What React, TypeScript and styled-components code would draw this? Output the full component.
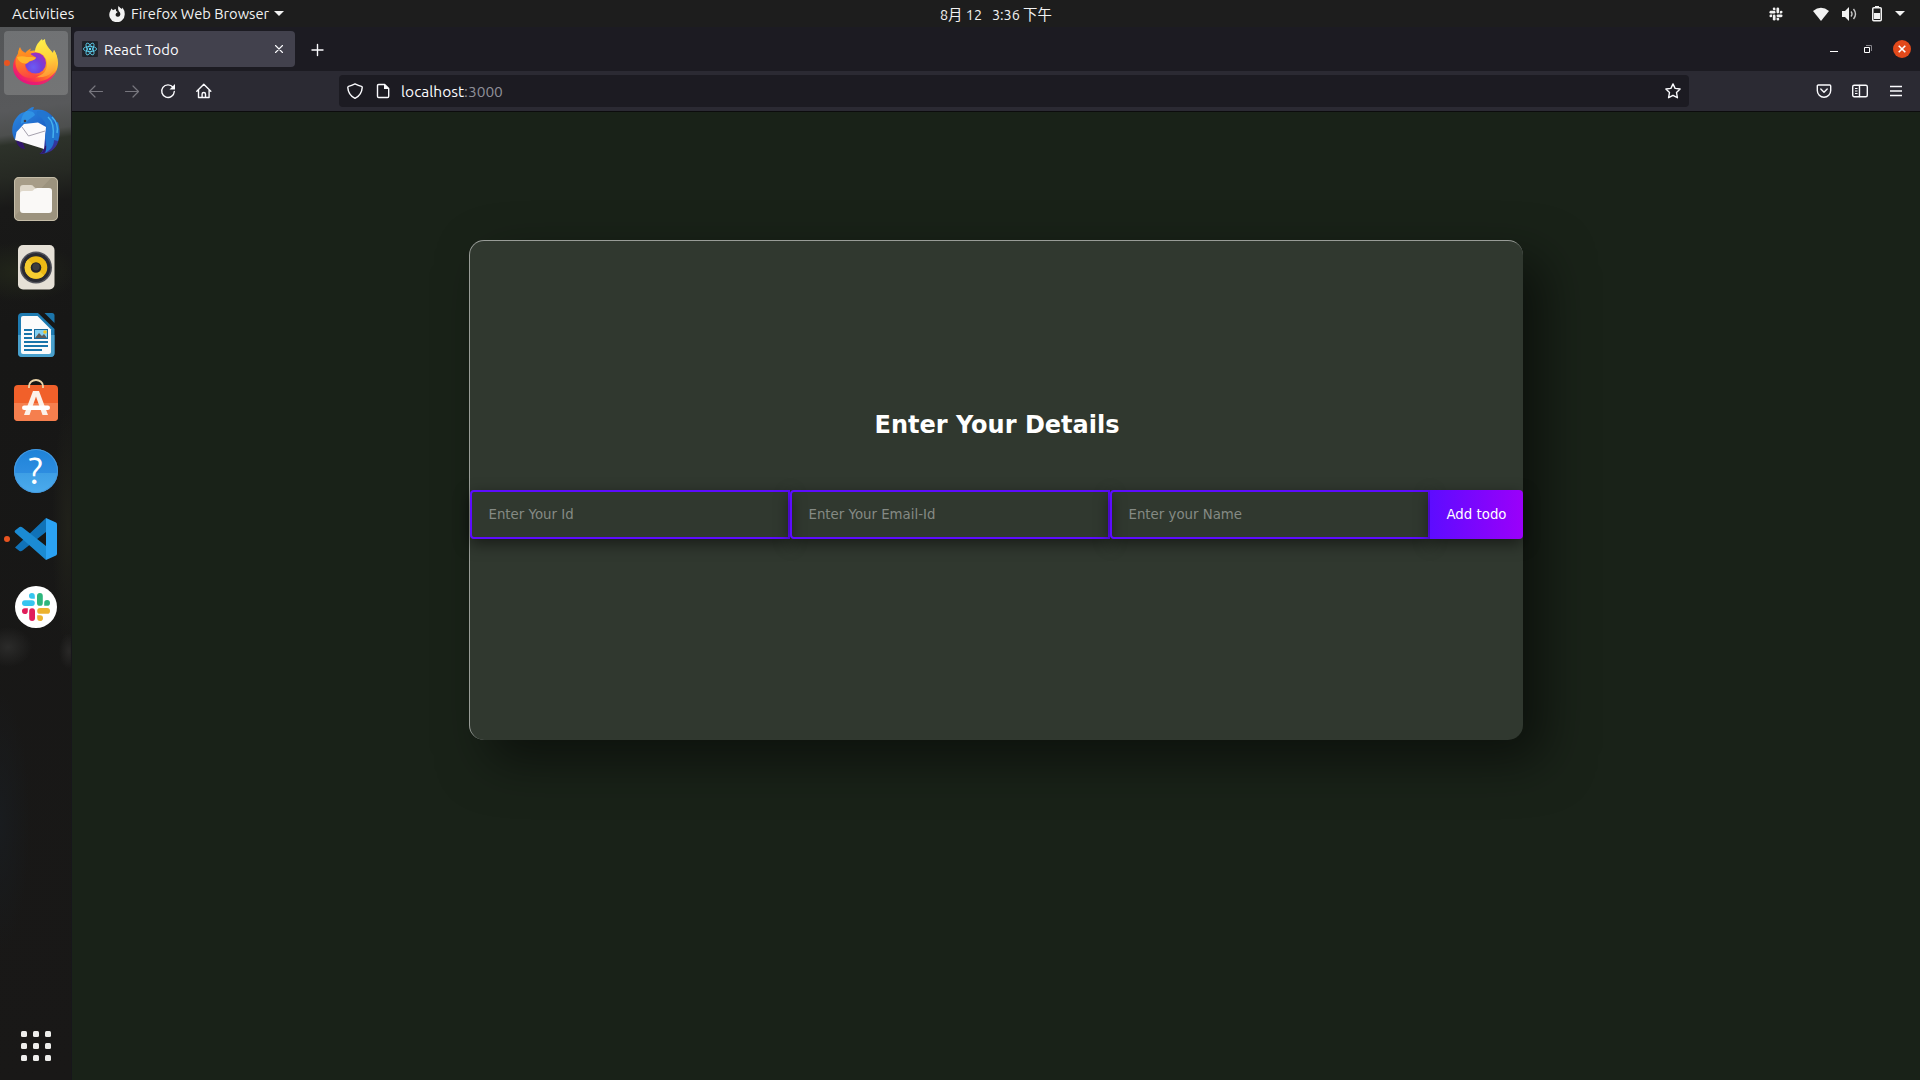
import React from 'react';
import styled, { createGlobalStyle } from 'styled-components';

const uiFont = `Ubuntu, 'Noto Sans', 'Noto Sans CJK SC', sans-serif`;
const pageFont = `'DejaVu Sans', sans-serif`;

const GlobalStyle = createGlobalStyle`
  * { box-sizing: border-box; }
  body { margin: 0; background: #192218; overflow: hidden; }
`;

const Desktop = styled.div`
  display: flex;
  flex-direction: column;
  width: 1920px;
  height: 1080px;
  overflow: hidden;
  font-family: ${uiFont};
  color: #f2f2f2;
`;

const TopBar = styled.header`
  flex: none;
  display: grid;
  grid-template-columns: 928px auto 1fr;
  align-items: center;
  height: 27px;
  padding: 0 15px 0 12px;
  background: #1d1d1d;
`;

const Group = styled.div`
  display: flex;
  align-items: center;
`;

const Label = styled.span<{ $size?: number; $w?: number }>`
  font-size: ${(p) => p.$size ?? 14.7}px;
  width: ${(p) => (p.$w ? `${p.$w}px` : 'auto')};
  line-height: 20px;
  white-space: pre;
`;

const Clock = styled(Label)`
  padding-top: 2px;
`;

const Workspace = styled.div`
  flex: 1;
  display: flex;
  min-height: 0;
`;

const Dock = styled.nav`
  flex: none;
  display: flex;
  flex-direction: column;
  align-items: center;
  gap: 4px;
  width: 71px;
  padding: 4px 0 19px;
  background:
    radial-gradient(ellipse 24px 20px at 8px 620px, #2b2b2a, transparent),
    radial-gradient(ellipse 10px 18px at 69px 624px, #292827, transparent),
    radial-gradient(ellipse 30px 130px at 0 795px, #191c1f, transparent),
    radial-gradient(ellipse 60px 30px at 20px 245px, #22261a, transparent),
    radial-gradient(ellipse 16px 120px at 68px 500px, #20211a, transparent),
    linear-gradient(172deg, #545658 0, #58595b 84px, #4d4f4e 108px, #2d322a 118px, #262923 150px, #191918 180px, #171716 300px, #191817 100%);
`;

const DockItem = styled.div<{ $active?: boolean; $running?: boolean }>`
  position: relative;
  flex: none;
  display: flex;
  align-items: center;
  justify-content: center;
  width: 64px;
  height: 64px;
  border-radius: 4px;
  background: ${(p) => (p.$active ? 'rgba(255,255,255,.17)' : 'transparent')};

  &::before {
    content: '';
    display: ${(p) => (p.$running ? 'block' : 'none')};
    position: absolute;
    left: 0;
    top: 29px;
    width: 6px;
    height: 6px;
    border-radius: 50%;
    background: #e95420;
  }
`;

const AppsGrid = styled.div`
  display: grid;
  grid-template-columns: repeat(3, 6px);
  gap: 6px;
  margin-top: auto;
`;

const AppsDot = styled.i`
  height: 6px;
  border-radius: 1.5px;
  background: #eeeeec;
`;

const Window = styled.main`
  flex: 1;
  display: flex;
  flex-direction: column;
  min-width: 0;
  border-left: 1px solid #17161b;
`;

const TabStrip = styled.div`
  flex: none;
  display: flex;
  align-items: center;
  height: 44px;
  padding: 0 9px 0 2px;
  background: #1c1b22;
`;

const Tab = styled.div`
  display: flex;
  align-items: center;
  width: 221px;
  height: 36px;
  padding: 0 11px 0 8px;
  border-radius: 4px;
  background: #42414d;
  color: #fbfbfe;
`;

const TabTitle = styled(Label)`
  flex: 1;
  margin-left: 6px;
  padding-top: 1px;
`;

const NewTab = styled.div`
  display: flex;
  margin: 1px 0 0 15px;
`;

const WindowControls = styled.div`
  display: flex;
  align-items: center;
  margin-left: auto;
`;

const Toolbar = styled.div`
  flex: none;
  display: flex;
  align-items: center;
  height: 41px;
  padding: 0 16px;
  background: #2b2a33;
  border-bottom: 1px solid #0c0c0d;
`;

const NavButtons = styled.div`
  display: flex;
  gap: 20px;
  width: 251px;
`;

const UrlBar = styled.div`
  display: flex;
  align-items: center;
  width: 1350px;
  height: 32px;
  padding: 0 8px;
  border-radius: 4px;
  background: #1c1b22;
`;

const Url = styled(Label)`
  flex: 1;
  margin-left: 10px;
  padding-top: 1px;
  color: #fbfbfe;
`;

const Port = styled.span`
  color: #8f8f98;
`;

const Page = styled.section`
  flex: 1;
  display: flex;
  justify-content: center;
  align-items: flex-start;
  padding-top: 128px;
  background: #192218;
  font-family: ${pageFont};
`;

const Card = styled.div`
  display: flex;
  flex-direction: column;
  align-items: center;
  width: 1054px;
  height: 500px;
  margin-right: 1px;
  padding-top: 170px;
  border-top: 1px solid rgba(255, 255, 255, 0.5);
  border-left: 1px solid rgba(255, 255, 255, 0.5);
  border-radius: 15px;
  background: rgba(255, 255, 255, 0.1);
  box-shadow: 20px 20px 50px rgba(0, 0, 0, 0.5);
`;

const Title = styled.h1`
  margin: 0 0 51px;
  padding-left: 2px;
  font-size: 24px;
  line-height: 28px;
  font-weight: 700;
  color: #fff;
`;

const Form = styled.form`
  display: flex;
  width: 1053px;
`;

const Field = styled.input`
  width: 320px;
  height: 49px;
  padding: 14px 32px 14px 17px;
  border: 2px solid #5d0cff;
  border-radius: 4px 0 0 4px;
  outline: none;
  background: transparent;
  color: #fff;
  font: 13.333px ${pageFont};
  box-shadow: 0 5px 15px rgba(0, 0, 0, 0.5);

  &::placeholder {
    color: #858a84;
    opacity: 1;
  }
`;

const AddButton = styled.button`
  width: 93px;
  height: 49px;
  padding: 0 0 1px 1px;
  border: 0;
  border-radius: 0 4px 4px 0;
  background: linear-gradient(90deg, #5d0cff 0%, #9b00fa 100%);
  color: #fff;
  font: 13.333px ${pageFont};
  box-shadow: 0 5px 15px rgba(0, 0, 0, 0.5);
`;

const Svg = ({ w, h = w, vb, children }: { w: number; h?: number; vb?: string; children: React.ReactNode }) => (
  <svg width={w} height={h} viewBox={vb ?? `0 0 ${w} ${h}`} fill="none" style={{ display: 'block', flex: 'none' }}>
    {children}
  </svg>
);

const Firefox = () => (
  <Svg w={48}>
    <defs>
      <linearGradient id="ffBody" x1="40" y1="6" x2="8" y2="42" gradientUnits="userSpaceOnUse">
        <stop offset="0" stopColor="#fff44f" /><stop offset=".32" stopColor="#ffb326" />
        <stop offset=".6" stopColor="#ff6a2b" /><stop offset=".82" stopColor="#f9314f" /><stop offset="1" stopColor="#e31587" />
      </linearGradient>
      <linearGradient id="ffFlame" x1="30" y1="0" x2="40" y2="40" gradientUnits="userSpaceOnUse">
        <stop offset="0" stopColor="#fff04a" /><stop offset=".5" stopColor="#ffd23a" /><stop offset="1" stopColor="#ff8a35" />
      </linearGradient>
      <radialGradient id="ffGlobe" cx=".4" cy=".7" r=".75">
        <stop offset="0" stopColor="#6a5cf5" /><stop offset=".5" stopColor="#7340dc" /><stop offset="1" stopColor="#a62bb9" />
      </radialGradient>
      <linearGradient id="ffHead" x1="6" y1="10" x2="12" y2="42" gradientUnits="userSpaceOnUse">
        <stop offset="0" stopColor="#ff9a1c" /><stop offset=".45" stopColor="#ff7a28" /><stop offset="1" stopColor="#fb3b48" />
      </linearGradient>
    </defs>
    <path d="M8 8c-1 2-1 4-1 6-4 4-6 9-6 14C1 39 12 46 23.500 46S46 36 46 24c0-5-1.500-9-4-13l-1 3c-3-4-8-8-8-14-6 3-8 8-8 12-4-1-8 0-11 2-3-1-5-3-6-6z" fill="url(#ffBody)" />
    <path d="M30 0c-5 4-7 9-7 13 6 0 11 4 12 10 1 8-4 14-12 15 13 2 22-6 22-17 0-4-1-7-3-10l-1 4c-2-4-9-8-11-15z" fill="url(#ffFlame)" />
    <circle cx="23.500" cy="24" r="10.500" fill="url(#ffGlobe)" />
    <path d="M8 8.500c0 3 2 5 5 6 2-3 4-4 6-5-1 2-1 4 0 6l5 3c-1 3-5 3-7 4-1 2-3 2-4 3 0 9 8 12 15 10-4 5-15 5-20-1-5-5-6-13-2-20 0-3 1-4 2-6z" fill="url(#ffHead)" />
    <path d="M5 18c3-1 7-1 10 0 3 0 6-.5 9 .5-1 3-5 3-7 4-1 1.500-3 2-4 2-4 0-7-3-8-6.500z" fill="#ffb52b" />
    <path d="M1.500 31c4 9 12 12 22 12 9 0 17-5 21-12-3 9-11 15-21 15-11 0-19-6-22-15z" fill="#e4177c" opacity=".75" />
  </Svg>
);

const Thunderbird = () => (
  <Svg w={48}>
    <defs>
      <linearGradient id="tb" x1="10" y1="2" x2="38" y2="46" gradientUnits="userSpaceOnUse">
        <stop stopColor="#2a86df" /><stop offset=".5" stopColor="#1d63c8" /><stop offset="1" stopColor="#3a2b93" />
      </linearGradient>
    </defs>
    <path d="M3 33C-1 27-1 17 5 10c3-4 6-5 9-5 2-3 5-5 8-5l-1 3c8-2 16 1 21 8 6 7 7 16 4 24-2 7-9 12-18 12 3-3 4-6 4-10z" fill="url(#tb)" />
    <path d="M4 33c1 6 5 9 9 9l-2-6z" fill="#32166b" />
    <path d="M27 47c3-1 5-4 6-8l5-1c-1 5-5 9-11 9z" fill="#32166b" />
    <path d="M12 17l14-1.500L34 20l-2 22L3 33l1.500-8z" fill="#fbfafc" />
    <path d="M10 20l6.500 9L33 24" stroke="#a5a1ae" strokeWidth="1" />
    <path d="M25 4c9-1 17 5 17 13l4-2c2 6 2 13 0 19l-4-1c0 7-5 11-9 13 2-4 1-8 1-11-2-7 1-11 0-16-1-5-5-9-9-11z" fill="#2275d0" />
    <path d="M36 10c6 5 6 13 5 21M40 10c5 5 6 11 5 16" stroke="#45b1ee" strokeWidth="1.500" />
    <path d="M14 4c4 0 8 0 9 4-3 3-7 4-9 8-2-1-4 0-5 1 0-5 1-9 5-13z" fill="#2f92e4" />
    <circle cx="13" cy="14" r="1.300" fill="#3d3a45" />
  </Svg>
);

const Files = () => (
  <Svg w={48}>
    <rect x="2" y="2" width="44" height="44" rx="5" fill="#9c937e" />
    <path d="M2 42V7a5 5 0 0 1 5-5h33z" fill="#a79d88" />
    <rect x="2.500" y="2.500" width="43" height="43" rx="4.500" stroke="#c5bda8" />
    <path d="M8 13q0-3 3-3h8q2 0 3 2l1.500 1V20H8z" fill="#dfd8ca" />
    <path d="M8 19q0-3 3-3h8q2 0 3-1.500 1-1.500 3-1.500h12q3 0 3 3v19q0 3-3 3H11q-3 0-3-3z" fill="#faf9f7" />
  </Svg>
);

const Rhythmbox = () => (
  <Svg w={48}>
    <rect x="6" y="2" width="36.500" height="44.500" rx="5" fill="#e5e0d6" />
    <circle cx="24" cy="24.500" r="16" fill="#51525a" />
    <circle cx="24" cy="24.500" r="14.500" fill="#292a31" />
    <circle cx="24" cy="24.500" r="11.300" fill="#ecb914" />
    <path d="M16 16.500a11.300 11.300 0 0 0 16 16" fill="#f5cd31" />
    <circle cx="24" cy="24.500" r="5.300" fill="#24242a" />
    <circle cx="24" cy="23.800" r="3.600" fill="#3c3c3e" />
  </Svg>
);

const Writer = () => (
  <Svg w={48}>
    <path d="M10 2h16l16.500 16v24a4 4 0 0 1-4 4H10a4 4 0 0 1-4-4V6a4 4 0 0 1 4-4z" fill="#1e7bb1" />
    <path d="M6 24h36.500v18a4 4 0 0 1-4 4H10a4 4 0 0 1-4-4z" fill="#49a0cc" />
    <path d="M11 5h14.500L39 18.500V41q0 2-2 2H11q-2 0-2-2V7q0-2 2-2z" fill="#fbfbfb" />
    <path d="M32.500 2H40a2.500 2.500 0 0 1 2.500 2.500V12z" fill="#1c75aa" />
    <path d="M12 19h8M12 23h8M12 27h8M12 31h24M12 35h24M12 39h18" stroke="#1874aa" strokeWidth="2" />
    <rect x="22.500" y="18.500" width="13" height="9" fill="#83d0f1" stroke="#176a9c" />
    <path d="M23 27l4-5 3 3 2-2 3 4z" fill="#5d5b58" /><circle cx="33" cy="21" r="1.800" fill="#f5c51c" />
  </Svg>
);

const Software = () => (
  <Svg w={48}>
    <rect x="2" y="6" width="44" height="36" rx="4" fill="#f1602a" />
    <path d="M2 24h44v14a4 4 0 0 1-4 4H6a4 4 0 0 1-4-4z" fill="#f57f4e" />
    <path d="M17 9V7a7 6 0 0 1 14 0v2" stroke="#ecd4a9" strokeWidth="1.800" />
    <path d="M21 12h6l9 24h-5.500L24 17.500 17.500 36H12z" fill="#fcf1e9" />
    <rect x="10" y="26.500" width="28" height="4.500" rx="2.200" fill="#fff" />
  </Svg>
);

const HelpBadge = styled.div`
  display: flex;
  align-items: center;
  justify-content: center;
  width: 44px;
  height: 44px;
  border-radius: 50%;
  background: linear-gradient(#1e82d8 0, #2d8de0 54%, #3e9fe5 55%, #4babed 100%);
  box-shadow: inset 0 0 0 1px #4599df;
  color: #fff;
  font: 37px/44px Ubuntu, 'Noto Sans', sans-serif;
`;

const VSCode = () => (
  <Svg w={48}>
    <path d="M3 32.500 7.500 36q1.500.8 3-.4L34 17V3z" fill="#1072b8" />
    <path d="M3 15.500 7.500 12q1.500-.8 3 .4L34 31v14L3 17.500q-.8-1 0-2z" fill="#1b8bd3" />
    <path d="M34 3l10 4.500q1 .6 1 2v29q0 1.400-1 2L34 45z" fill="#2ba2f3" />
  </Svg>
);

const SlackMark = ({ mono }: { mono?: boolean }) => {
  const c = mono ? ['#f0f0f0', '#f0f0f0', '#f0f0f0', '#f0f0f0'] : ['#36c5f0', '#2eb67d', '#ecb22e', '#e01e5a'];
  return (
    <>
      {c.map((fill, i) => (
        <g key={fill + i} transform={`rotate(${i * 90} 24 24)`} fill={fill}>
          <rect x="10" y="17.200" width="12.800" height="5.800" rx="2.900" />
          <path d="M22.800 15.800h-3a2.900 2.900 0 1 1 3-2.900z" />
        </g>
      ))}
    </>
  );
};

const SlackApp = () => (
  <Svg w={48}>
    <circle cx="24" cy="24" r="21" fill="#fff" />
    <SlackMark />
  </Svg>
);

const dock = [
  { name: 'firefox', icon: <Firefox />, active: true, running: true },
  { name: 'thunderbird', icon: <Thunderbird /> },
  { name: 'files', icon: <Files /> },
  { name: 'rhythmbox', icon: <Rhythmbox /> },
  { name: 'writer', icon: <Writer /> },
  { name: 'software', icon: <Software /> },
  { name: 'help', icon: <HelpBadge>?</HelpBadge> },
  { name: 'vscode', icon: <VSCode />, running: true },
  { name: 'slack', icon: <SlackApp /> },
];

const line = { stroke: '#fbfbfe', strokeWidth: 1.4, strokeLinecap: 'round' as const, strokeLinejoin: 'round' as const };
const dim = { ...line, stroke: '#77767e' };

const Tray = styled.div`
  display: flex;
  align-items: center;
  justify-content: flex-end;
`;

const Spacer = styled.span<{ $w: number }>`
  flex: none;
  width: ${(p) => p.$w}px;
`;

const fields = ['Enter Your Id', 'Enter Your Email-Id', 'Enter your Name'];

export default function App() {
  return (
    <Desktop>
      <GlobalStyle />
      <TopBar>
        <Group>
          <Label $w={97} $size={15.2}>Activities</Label>
          <Svg w={16}>
            <path d="M2.500 2.500 4 4.200Q5.500 3 7 3.200L7 5l1.800 1Q6.500 7 6.500 9A2.400 2.400 0 0 0 11 9.500Q12 7 10 5.500 8.500 3.500 9.500 0q1.500 2 3.500 3l.5-1.500Q16 5 15.700 8.500A7.700 7.500 0 1 1 1.300 5z" fill="#f2f2f2" />
          </Svg>
          <Spacer $w={6} />
          <Label $w={143}>Firefox Web Browser</Label>
          <Svg w={10} h={5}><path d="M0 0h10L5 5z" fill="#f2f2f2" /></Svg>
        </Group>
        <Clock $size={14.4}>8月 12   3:36 下午</Clock>
        <Tray>
          <Svg w={14} vb="9 9 30 30"><SlackMark mono /></Svg>
          <Spacer $w={30} />
          <Svg w={16} h={14}><path d="M0 4Q8-2.500 16 4L8 14z" fill="#f2f2f2" /></Svg>
          <Spacer $w={13} />
          <Svg w={15} h={14}>
            <path d="M0 4h3l4-4v14L3 10H0z" fill="#f2f2f2" />
            <path d="M9 4.500q2 2.500 0 5M11.500 2q4 5 0 10" stroke="#c8c8c8" strokeWidth="1.400" />
          </Svg>
          <Spacer $w={15} />
          <Svg w={10} h={16}>
            <path d="M3 0h4v2H3z" fill="#f2f2f2" />
            <rect x=".75" y="1.750" width="8.500" height="13" rx="1" stroke="#f2f2f2" strokeWidth="1.500" />
            <path d="M2 7h6v6H2z" fill="#f2f2f2" />
          </Svg>
          <Spacer $w={13} />
          <Svg w={10} h={5}><path d="M0 0h10L5 5z" fill="#f2f2f2" /></Svg>
        </Tray>
      </TopBar>
      <Workspace>
        <Dock>
          {dock.map((d) => (
            <DockItem key={d.name} $active={d.active} $running={d.running}>{d.icon}</DockItem>
          ))}
          <AppsGrid>
            {Array.from({ length: 9 }, (_, i) => <AppsDot key={i} />)}
          </AppsGrid>
        </Dock>
        <Window>
          <TabStrip>
            <Tab>
              <Svg w={16}>
                <rect width="16" height="16" rx="1" fill="#20232a" />
                <g stroke="#61dafb" strokeWidth=".8">
                  <ellipse cx="8" cy="8" rx="6.600" ry="2.600" />
                  <ellipse cx="8" cy="8" rx="6.600" ry="2.600" transform="rotate(60 8 8)" />
                  <ellipse cx="8" cy="8" rx="6.600" ry="2.600" transform="rotate(120 8 8)" />
                </g>
                <circle cx="8" cy="8" r="1.200" fill="#61dafb" />
              </Svg>
              <TabTitle $size={14.8}>React Todo</TabTitle>
              <Svg w={10}><path d="M1.500 1.500l7 7M8.500 1.500l-7 7" {...line} strokeWidth={1.100} /></Svg>
            </Tab>
            <NewTab>
              <Svg w={16}><path d="M7.500 2.500v11M2 8h11" {...line} /></Svg>
            </NewTab>
            <WindowControls>
              <Svg w={8} h={10}><path d="M0 7h8v1H0z" fill="#fff" /></Svg>
              <Spacer $w={26} />
              <Svg w={8}>
                <path d="M2 .5h5.500V6" stroke="#85848a" />
                <path d="M.5 2.500h5v5h-5z" stroke="#fff" />
              </Svg>
              <Spacer $w={21} />
              <Svg w={18}>
                <circle cx="9" cy="9" r="9" fill="#e2491b" />
                <path d="M5.700 5.700l6.600 6.600M12.300 5.700l-6.600 6.600" stroke="#fff" strokeWidth="1.600" />
              </Svg>
            </WindowControls>
          </TabStrip>
          <Toolbar>
            <NavButtons>
              <Svg w={16}><path d="M14.500 8.500H1.500M7 3L1.500 8.500 7 14" {...dim} strokeWidth={1.200} /></Svg>
              <Svg w={16}><path d="M1.500 8.500h13M9 3l5.500 5.500L9 14" {...dim} strokeWidth={1.200} /></Svg>
              <Svg w={16}>
                <path d="M13 4.300A6.300 6.300 0 1 0 14.300 8.500" {...line} />
                <path d="M15 1v5.500H9.500z" fill="#fbfbfe" />
              </Svg>
              <Svg w={16}>
                <path d="M.8 8.300L7.800 1.300l7 7M2.500 7v7.500h10.600V7M6.100 14.300V11q0-1.500 1.700-1.500T9.500 11v3.300" {...line} />
              </Svg>
            </NavButtons>
            <UrlBar>
              <Svg w={16}>
                <path d="M8 .9q3.500 1.800 6.500 2.500.8.200.7 1.200Q14.700 12 8 15.300 1.300 12 .8 4.600q0-1 .7-1.200Q4.500 2.700 8 .9z" {...line} />
              </Svg>
              <Spacer $w={12} />
              <Svg w={16}>
                <path d="M3.700 1.500h6l4 4v7.800q0 1.200-1.200 1.200H3.700q-1.200 0-1.200-1.200V2.700q0-1.200 1.200-1.200z" {...line} />
                <path d="M9 1l5 5H9z" fill="#fbfbfe" />
              </Svg>
              <Url $size={15.5}>localhost<Port>:3000</Port></Url>
              <Svg w={16}>
                <path d="M8 .9l2.100 4.500 5 .6-3.600 3.500.9 5.200L8 12.300l-4.400 2.400.9-5.200L.9 6l5-.6z" {...line} />
              </Svg>
            </UrlBar>
            <Spacer $w={127} />
            <Svg w={16}>
              <path d="M2.300 2h11.400q1 0 1 1v4.500a6.700 6.700 0 0 1-13.400 0V3q0-1 1-1zM4.800 6L8 9.200 11.200 6" {...line} />
            </Svg>
            <Spacer $w={20} />
            <Svg w={16}>
              <rect x=".7" y="2.200" width="14.600" height="11.600" rx="1.500" {...line} />
              <path d="M7.500 2.500v11" {...line} />
              <path d="M3 5.500h2.500M3 8h2.500M3 10.500h2.500" stroke="#fbfbfe" strokeWidth="1" />
            </Svg>
            <Spacer $w={20} />
            <Svg w={16}><path d="M2 3.500h12M2 8h12M2 12.500h12" stroke="#fbfbfe" strokeWidth="1.300" /></Svg>
          </Toolbar>
          <Page>
            <Card>
              <Title>Enter Your Details</Title>
              <Form>
                {fields.map((f) => <Field key={f} placeholder={f} />)}
                <AddButton type="button">Add todo</AddButton>
              </Form>
            </Card>
          </Page>
        </Window>
      </Workspace>
    </Desktop>
  );
}
